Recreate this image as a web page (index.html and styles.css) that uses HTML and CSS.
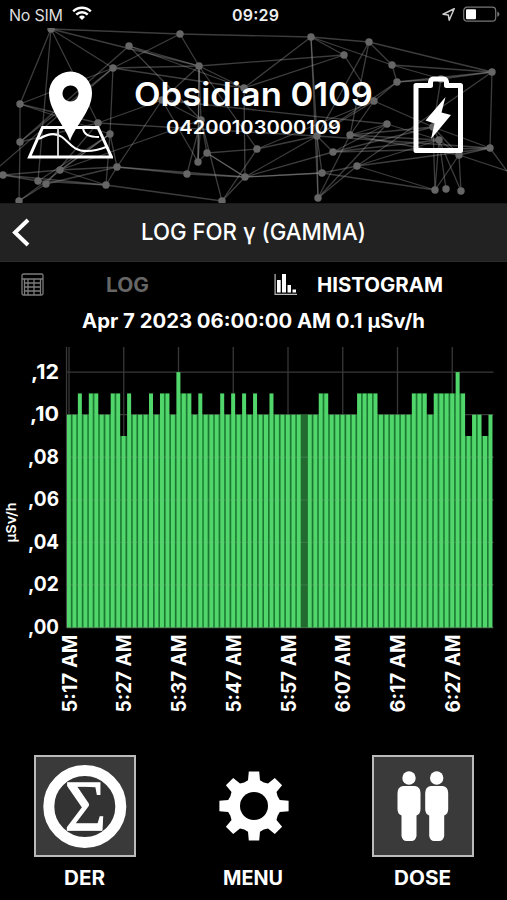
FILE: index.html
```html
<!DOCTYPE html>
<html lang="en">
<head>
<meta charset="UTF-8">
<meta name="viewport" content="width=device-width, initial-scale=1.0">
<title>Obsidian 0109</title>
<link rel="stylesheet" href="styles.css">
</head>
<body>
<div class="app">
    <div class="status-bar">
        <div class="carrier">
            <svg class="fit" width="54" height="20"><text x="0" y="15" textLength="54" class="status-text">No SIM</text></svg>
            <svg width="20" height="15" viewBox="0 0 20 15" fill="none" stroke="#fff" stroke-width="2.4">
                <path d="M1.2 5.4a12.4 12.4 0 0 1 17.6 0M4.3 8.6a8 8 0 0 1 11.4 0"/>
                <path d="M10 14l-3-3.1a4.3 4.3 0 0 1 6 0z" fill="#fff" stroke="none"/>
            </svg>
        </div>
        <svg class="fit" width="47" height="20"><text x="0" y="15" textLength="47" class="status-text clock">09:29</text></svg>
        <div class="status-right">
            <svg width="13" height="13" viewBox="0 0 13 13" fill="none" stroke="#ccc" stroke-width="1.5" stroke-linejoin="round"><path d="M12.200 .8L1 6.200l5.300.7.900 5.300z"/></svg>
            <svg width="37" height="17" viewBox="0 0 37 17">
                <rect x=".7" y="1.2" width="32" height="14" rx="3.5" fill="none" stroke="#777" stroke-width="1.2"/>
                <rect x="3" y="3.3" width="10" height="10" rx="1" fill="#fff"/>
                <path d="M34.3 5.5q2 .8 2 2.7t-2 2.7z" fill="#777"/>
            </svg>
        </div>
    </div>

    <div class="header">
        <svg class="network" id="network" width="507" height="175" viewBox="0 28 507 175"></svg>
        <svg class="map-icon" width="86" height="90" viewBox="27 70 86 90">
            <g fill="none" stroke="#fff">
                <path d="M42.5 127.5H98L111.500 157H29.500z" stroke-width="3"/>
                <path d="M39 139C47 134 55 132 62 137C70 143 73 151 87 151C96 151 101 149 106 147M83 128c1 7 6 9 16 9" stroke-width="2"/>
                <path d="M58 128v28" stroke="#ddd" stroke-width="1.800"/>
            </g>
            <path fill="#fff" fill-rule="evenodd" d="M70 141C66 127 49 111 49 93A21.500 21.500 0 0 1 92 93C92 111 74 127 70 141zM70.500 85.500a8 8 0 1 0 .01 0z"/>
        </svg>
        <div class="device">
            <svg class="fit" width="240" height="38"><text x="0" y="30" textLength="239" lengthAdjust="spacingAndGlyphs" class="device-name">Obsidian 0109</text></svg>
            <svg class="fit" width="176" height="22"><text x="0" y="17" textLength="175" lengthAdjust="spacingAndGlyphs" class="device-serial">04200103000109</text></svg>
        </div>
        <svg class="battery-icon" width="50" height="78" viewBox="413 76 50 78">
            <path d="M416 85.500H430.500V82Q431 79 434 79H443Q446 79 446.500 82V85.500H460.500V150.500H416z" fill="none" stroke="#fff" stroke-width="5" stroke-linejoin="round"/>
            <path d="M445.500 97L425.500 120.500L434.500 123.500L431 139L451 115L441.500 112.500z" fill="#fff"/>
        </svg>
    </div>

    <div class="title-bar">
        <svg width="20" height="32" viewBox="0 0 20 32" fill="none" stroke="#fff" stroke-width="4"><path d="M18 3L5 15.500L18 28"/></svg>
        <svg class="fit" width="226" height="30"><text x="0" y="22" textLength="225" lengthAdjust="spacingAndGlyphs" class="title">LOG FOR γ (GAMMA)</text></svg>
        <span></span>
    </div>

    <div class="tabs">
        <div class="tab tab-log">
            <svg width="23" height="23" viewBox="0 0 23 23" fill="none" stroke="#7b7b7b" stroke-width="1.300">
                <rect x="1" y="1" width="21" height="21" rx="1.500"/>
                <path d="M1 6H22M3.500 10H19.500M3.500 14H19.500M3.500 18H19.500M3.500 6V22M7 6V22M13 6V22M19.500 6V22"/>
            </svg>
            <svg class="fit" width="44" height="24"><text x="0" y="19" textLength="43" lengthAdjust="spacingAndGlyphs" class="label inactive">LOG</text></svg>
        </div>
        <div class="tab tab-histogram">
            <svg width="23" height="23" viewBox="0 0 23 23" fill="#fff">
                <path d="M.5 1h1.200v19.800H23V22H.5z" fill="#bbb"/>
                <path d="M3 7h3.700v12.500H3zM8 1h4v18.500H8zM13.500 12h3.500v7.500h-3.500zM18.500 16.500h3.500v3h-3.500z"/>
            </svg>
            <svg class="fit" width="127" height="24"><text x="0" y="19" textLength="126" lengthAdjust="spacingAndGlyphs" class="label">HISTOGRAM</text></svg>
        </div>
    </div>

    <div class="reading"><svg class="fit" width="344" height="26"><text x="0" y="19" textLength="343" lengthAdjust="spacingAndGlyphs" class="label">Apr 7 2023 06:00:00 AM 0.1 µSv/h</text></svg></div>

    <svg class="chart" id="chart" width="507" height="390" viewBox="0 340 507 390"></svg>

    <div class="bottom-nav">
        <div class="nav-item">
            <div class="nav-icon framed">
                <svg width="97" height="97" viewBox="36.500 757 97 97">
                    <circle cx="85.300" cy="805.500" r="36" fill="#333" stroke="#fff" stroke-width="11"/>
                    <text x="85.800" y="829" text-anchor="middle" class="sigma">Σ</text>
                </svg>
            </div>
            <svg class="fit" width="42" height="24"><text x="0" y="18" textLength="41" lengthAdjust="spacingAndGlyphs" class="label">DER</text></svg>
        </div>
        <div class="nav-item">
            <div class="nav-icon">
                <svg id="gear" width="72" height="72" viewBox="-36 -36 72 72"></svg>
            </div>
            <svg class="fit" width="61" height="24"><text x="0" y="18" textLength="60" lengthAdjust="spacingAndGlyphs" class="label">MENU</text></svg>
        </div>
        <div class="nav-item">
            <div class="nav-icon framed">
                <svg width="52" height="70" viewBox="0 0 52 70" fill="#fff">
                    <g id="person">
                        <circle cx="12" cy="7" r="6.700"/>
                        <path d="M6 15H18Q23.500 16 23.500 22V38Q23.500 43 19.500 44.500V65Q18.500 70 14.500 70H9.500Q5.500 70 4.500 65V44.500Q.5 43 .5 38V22Q.5 16 6 15z"/>
                    </g>
                    <use href="#person" x="27.700"/>
                </svg>
            </div>
            <svg class="fit" width="58" height="24"><text x="0" y="18" textLength="57" lengthAdjust="spacingAndGlyphs" class="label">DOSE</text></svg>
        </div>
    </div>
</div>
<script src="script.js"></script>
</body>
</html>
```
FILE: styles.css
```css
body, html {
    margin: 0;
    background: #000;
    color: #fff;
    font-family: Inter, "Noto Sans", "Liberation Sans", sans-serif;
}

svg {
    display: block;
    flex: none;
}

.fit {
    overflow: visible;
}

text {
    fill: #fff;
}

.app {
    width: 507px;
    height: 900px;
    overflow: hidden;
    display: flex;
    flex-direction: column;
}

/* status bar */
.status-bar {
    height: 28px;
    flex: none;
    box-sizing: border-box;
    padding: 6px 7px 0 9px;
    display: grid;
    grid-template-columns: 223px 1fr auto;
    align-items: start;
}

.carrier {
    display: flex;
    gap: 9px;
}

.status-right {
    display: flex;
    gap: 8px;
    align-items: center;
}

.status-text {
    font-size: 16px;
    fill: #ddd;
}

.clock {
    font-weight: 600;
    fill: #eee;
}

/* device header */
.header {
    position: relative;
    height: 175px;
    flex: none;
    box-sizing: border-box;
    padding: 42px 44px 0 27px;
    display: flex;
    align-items: flex-start;
}

.network {
    position: absolute;
    left: 0;
    top: 0;
}

.map-icon, .device, .battery-icon {
    position: relative;
}

.battery-icon {
    margin-top: 6px;
    margin-left: auto;
}

.device {
    display: flex;
    flex-direction: column;
    align-items: center;
    padding-top: 6px;
    gap: 3px;
    margin-left: 21px;
}

.device-name {
    font-size: 33px;
    font-weight: 600;
}

.device-serial {
    font-size: 19px;
    font-weight: 600;
}

/* title bar */
.title-bar {
    height: 59px;
    flex: none;
    box-sizing: border-box;
    padding: 0 12px 0 10px;
    background: #222;
    border-top: 1px solid #1a1a1a;
    border-bottom: 1px solid #2b2b2b;
    display: grid;
    grid-template-columns: 131px 1fr auto;
    align-items: center;
}

.title {
    font-size: 23px;
    font-weight: 500;
}

/* tabs */
.tabs {
    height: 45px;
    flex: none;
    display: grid;
    grid-template-columns: 253px 1fr;
    align-items: center;
}

.tab {
    display: flex;
    align-items: center;
}

.tab-log {
    padding-left: 21px;
    gap: 62px;
}

.tab-histogram {
    padding-left: 21px;
    gap: 20px;
}

.label {
    font-size: 19.5px;
    font-weight: 650;
}

.inactive {
    fill: #666;
}

.reading {
    height: 33px;
    flex: none;
    box-sizing: border-box;
    padding: 2px 0 0 82px;
}

/* chart */
.grid-line {
    stroke: #383838;
    stroke-width: 1.3;
}

.grid-over {
    stroke: #7b8;
    stroke-opacity: 0.2;
    stroke-width: 1.3;
}

.axis-text {
    font-size: 20px;
    font-weight: 650;
}

.time-text {
    font-size: 19.5px;
    font-weight: 650;
}

.axis-title {
    font-size: 13.5px;
    font-weight: 600;
}

/* bottom buttons */
.bottom-nav {
    padding-top: 25px;
    display: grid;
    grid-template-columns: 169px 169px 169px;
}

.nav-item {
    display: flex;
    flex-direction: column;
    align-items: center;
    gap: 10px;
}

.nav-icon {
    width: 98px;
    height: 98px;
    border: 2px solid transparent;
    display: flex;
    align-items: center;
    justify-content: center;
}

.framed {
    background: #3a3a3a;
    border-color: #bbb;
}

.sigma {
    font-family: "Liberation Serif", serif;
    font-size: 71px;
    stroke: #fff;
    stroke-width: 1.3;
}
```
FILE: script.js
```js
// network in the header
var nodes = {
    A: [51, 29], B: [129, 46], C: [180, 34], D: [113, 68], E: [199, 66], F: [20, 104],
    G: [20, 142], H: [98, 123], I: [110, 134], J: [117, 167], K: [60, 170], L: [3, 175],
    M: [38, 181], N: [46, 184], O: [106, 185], P: [19, 201], Q: [198, 162], R: [207, 153],
    S: [187, 174], T: [245, 177], U: [222, 201], V: [162, 100], W: [244, 88], X: [201, 120],
    a: [311, 37], b: [369, 42], c: [344, 55], d: [392, 65], e: [492, 72], f: [397, 82],
    g: [441, 79], h: [374, 101], i: [387, 124], j: [350, 135], k: [333, 152], l: [257, 149],
    m: [322, 173], n: [357, 166], o: [318, 198], p: [317, 136], q: [439, 140], r: [490, 148],
    s: [459, 155], t: [435, 190], u: [446, 189], v: [461, 191], w: [433, 127], y: [507, 171],
    z: [0, 166]
};
var edges = 'AF AH AD AE AC FG GP GD FD FI FH Dz BG BE BW BX CD CE Ca DE DI DW GH HN HV IK IM JK JN JS JI ' +
    'KL KX KO LO LM MO MA NP PI OJ OU OI EW EX EQ VX VQ XQ XR XS XU QR QE ST JT TW TR RT Rl UT Ul Vi VJ VE ' +
    'ab ac ad ap aW cE cW ch bd be bp bj de df fe fh fp fg gw gd ge hp hj hw hl iq io ij ik jw jq jo js ' +
    'pm po pk pT pl pr kq kw kT kr mn mt mT Tm nq no nt nr wq wr ws wt qt qu qv qs sv sr er ry sy st en ao El Hp';

var html = '';
edges.split(' ').forEach(function(e) {
    var p = nodes[e[0]], q = nodes[e[1]];
    html += '<line x1="' + p[0] + '" y1="' + p[1] + '" x2="' + q[0] + '" y2="' + q[1] + '" stroke="#aaa" stroke-opacity=".36" stroke-width="1.3"/>';
});
Object.keys(nodes).forEach(function(k) {
    if (k !== 'y' && k !== 'z') {
        html += '<circle cx="' + nodes[k][0] + '" cy="' + nodes[k][1] + '" r="3.7" fill="#666"/>';
    }
});
document.getElementById('network').innerHTML = html;

// histogram, values in 0.01 µSv/h, one bar per minute
var values = [
    10, 10, 11, 10, 11, 11, 10, 10, 11, 11, 9, 11, 10, 10, 10, 11, 10, 11, 11, 10,
    12, 11, 11, 10, 11, 10, 10, 10, 11, 10, 11, 10, 11, 10, 11, 10, 10, 11, 10, 10,
    10, 10, 10, 10, 10, 10, 11, 11, 10, 10, 10, 10, 10, 11, 11, 11, 11, 10, 10, 10,
    10, 10, 10, 11, 11, 11, 10, 11, 11, 11, 11, 12, 11, 9, 10, 10, 9, 10
];
var times = ['5:17 AM', '5:27 AM', '5:37 AM', '5:47 AM', '5:57 AM', '6:07 AM', '6:17 AM', '6:27 AM'];
var left = 66.5, base = 627.5, step = 5.475, unit = 21.28, selected = 43;

function line(x1, y1, x2, y2, cls) {
    return '<line class="' + cls + '" x1="' + x1 + '" y1="' + y1 + '" x2="' + x2 + '" y2="' + y2 + '"/>';
}

html = line(left, 347, left, base, 'grid-line');
times.forEach(function(t, n) {
    var x = 69 + n * step * 10;
    html += line(x, 347, x, base, 'grid-line');
});
for (var v = 0; v <= 12; v += 2) {
    html += line(left, base - v * unit, 493.5, base - v * unit, 'grid-line');
}
values.forEach(function(val, n) {
    var x = left + n * step, y = base - val * unit, h = val * unit;
    // darker strip is the gap to the neighbouring bar
    var gapTop = base - Math.min(val, n < values.length - 1 ? values[n + 1] : 0) * unit;
    if (n < values.length - 1) {
        html += '<rect x="' + (x + 4.1) + '" y="' + gapTop + '" width="2" height="' + (base - gapTop) + '" fill="#187a30"/>';
    }
    html += '<rect x="' + (x + 0.4) + '" y="' + y + '" width="4" height="' + h + '" fill="' + (n === selected ? '#246b30' : '#50d66a') + '"/>';
});
html += '<rect x="' + (left + selected * step - 1) + '" y="' + (base - 10 * unit) + '" width="6.6" height="' + 10 * unit + '" fill="#226a2f"/>';
for (v = 0; v <= 8; v += 2) {
    html += line(left, base - v * unit, 493, base - v * unit, 'grid-over');
}
for (v = 0; v <= 12; v += 2) {
    var w = [31, 31, 31, 31, 31, 29, 28][v / 2];
    html += '<text class="axis-text" x="' + (59 - w) + '" y="' + (base - v * unit + 6.5) + '" textLength="' + w + '" lengthAdjust="spacingAndGlyphs">,' + (v < 10 ? '0' : '') + v + '</text>';
}
times.forEach(function(t, n) {
    html += '<text class="time-text" transform="translate(' + (76.5 + n * step * 10) + ' 712.5) rotate(-90)" textLength="78" lengthAdjust="spacingAndGlyphs">' + t + '</text>';
});
html += '<text class="axis-title" transform="translate(16 542.5) rotate(-90)" textLength="40" lengthAdjust="spacingAndGlyphs">µSv/h</text>';
document.getElementById('chart').innerHTML = html;

// gear with eight teeth
var d = '';
for (var g = 0; g < 8; g++) {
    [[-22.5, 25.5], [-13, 26.5], [-8.5, 35], [8.5, 35], [13, 26.5]].forEach(function(pt, k) {
        var a = (g * 45 + pt[0]) * Math.PI / 180;
        d += (g || k ? 'L' : 'M') + (pt[1] * Math.cos(a)).toFixed(1) + ' ' + (pt[1] * Math.sin(a)).toFixed(1);
    });
}
document.getElementById('gear').innerHTML = '<path d="' + d + 'z" fill="#fff"/><circle r="14" fill="#000"/>';
```
